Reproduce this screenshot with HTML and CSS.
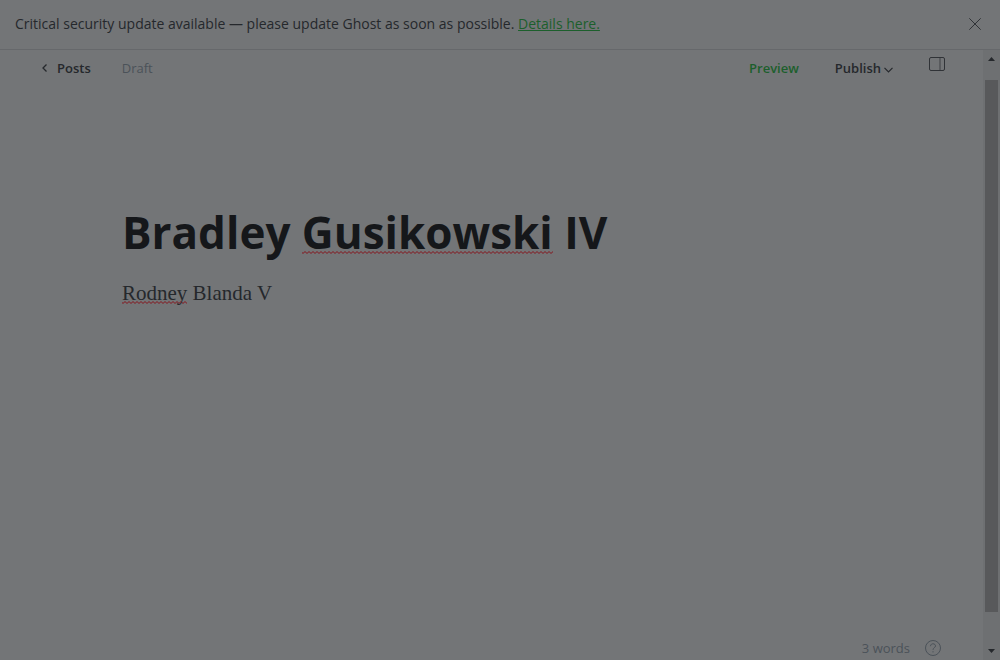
FILE: index.html
```html
<!DOCTYPE html>
<html lang="en">
<head>
<meta charset="utf-8">
<title>Bradley Gusikowski IV</title>
<link rel="stylesheet" href="styles.css">
</head>
<body>
<div class="app">
  <aside class="alert">
    <p class="alert-text">Critical security update available — please update Ghost as soon as possible. <a class="alert-link" href="#details">Details here.</a></p>
    <button class="icon-button" type="button" aria-label="Close">
      <svg width="12" height="12" viewBox="0 0 12 12" fill="none" stroke="currentColor"><path d="M0.3 0.3L11.7 11.7M11.7 0.3L0.3 11.7"/></svg>
    </button>
  </aside>
  <div class="workspace">
    <main class="editor">
      <header class="toolbar">
        <a class="back" href="#posts">
          <svg width="5" height="8" viewBox="0 0 5 8" fill="none" stroke="currentColor" stroke-width="1.3"><path d="M4.5 0.5L1 4L4.5 7.5"/></svg>
          Posts</a>
        <span class="status">Draft</span>
        <button class="preview" type="button">Preview</button>
        <button class="publish" type="button">Publish
          <svg width="9" height="6" viewBox="0 0 9 6" fill="none" stroke="currentColor" stroke-width="1.2"><path d="M0.5 0.8L4.5 4.8L8.5 0.8"/></svg>
        </button>
        <button class="icon-button settings" type="button" aria-label="Settings">
          <svg width="16" height="14" viewBox="0 0 16 14" fill="none" stroke="currentColor"><rect x="0.5" y="0.5" width="15" height="13" rx="1.5"/><path d="M11 0.5V13.5" stroke-opacity="0.8"/></svg>
        </button>
      </header>
      <article class="post">
        <h1 class="title">Bradley <span class="misspelt">Gusikowski</span> IV</h1>
        <p class="body"><span class="misspelt">Rodney</span> Blanda V</p>
      </article>
      <footer class="footer">
        <span>3 words</span>
        <a class="help" href="#help" aria-label="Help">
          <svg width="16" height="16" viewBox="0 0 16 16" fill="none" stroke="currentColor"><circle cx="8" cy="8" r="7.5"/><path d="M5.5 6.2C5.5 2.9 10.5 3.1 10.5 6C10.5 7.7 8 7.6 8 9.9M8 11.2V12.4"/></svg>
        </a>
      </footer>
    </main>
    <div class="scrollbar" aria-hidden="true">
      <svg width="7" height="4" viewBox="0 0 7 4" fill="currentColor"><path d="M0 4L3.5 0L7 4Z"/></svg>
      <div class="track"><div class="thumb"></div></div>
      <svg width="7" height="4" viewBox="0 0 7 4" fill="currentColor"><path d="M0 0H7L3.5 4Z"/></svg>
    </div>
  </div>
</div>
</body>
</html>
```
FILE: styles.css
```css
* { box-sizing: border-box; }
body {
  margin: 0;
  background: #737577;
  color: #25282c;
  font: 13px/20px "Segoe UI", "Open Sans", "Noto Sans", sans-serif;
}
.app { height: 100vh; display: flex; flex-direction: column; }
.alert {
  display: flex;
  align-items: center;
  justify-content: space-between;
  height: 50px;
  padding: 0 19px 2px 15px;
  border-bottom: 1px solid #66686b;
}
.alert-text { margin: 0; font-size: 14px; }
.alert-link { color: #1c5f2c; }
button { padding: 0; border: 0; background: none; color: inherit; font: inherit; }
.icon-button { display: flex; color: #303337; }
.workspace { flex: 1; min-height: 0; display: flex; }
.editor { flex: 1; display: flex; flex-direction: column; }
.toolbar {
  display: flex;
  align-items: center;
  height: 36px;
  padding: 0 38px 0 42px;
  font-weight: 600;
}
.back { display: flex; align-items: center; gap: 10px; color: inherit; text-decoration: none; }
.status { margin: 0 auto 0 31px; color: #4b5259; font-weight: 400; }
.preview { color: #1c5f2c; }
.publish { display: flex; align-items: center; gap: 3px; margin: 0 36px; }
.publish svg { margin-top: 4px; }
.settings { margin-bottom: 8px; }
.post { flex: 1; padding: 116px 122px 0; }
.title { margin: 0; color: #15171a; font-size: 44px; line-height: 60px; font-weight: 700; }
.body { margin: 16px 0 0; font: 21px/30px Georgia, "Liberation Serif", serif; }
.misspelt {
  background: url("data:image/svg+xml,%3Csvg xmlns='http://www.w3.org/2000/svg' width='4' height='3'%3E%3Cpath d='M-1 .5L1 2.5L3 .5L5 2.5' fill='none' stroke='%23850f18'/%3E%3C/svg%3E") repeat-x left bottom 1px;
}
.title .misspelt { background-position: left bottom 8px; }
.footer {
  display: flex;
  align-items: center;
  justify-content: flex-end;
  gap: 15px;
  height: 24px;
  padding-right: 42px;
  color: #4b5259;
}
.help { display: flex; color: inherit; }
.scrollbar {
  display: flex;
  flex-direction: column;
  align-items: center;
  width: 17px;
  padding: 7px 0;
  background: #6e7072;
}
.track { flex: 1; width: 13px; padding: 19px 0 37px; }
.thumb { height: 100%; background: #58595b; }
```
